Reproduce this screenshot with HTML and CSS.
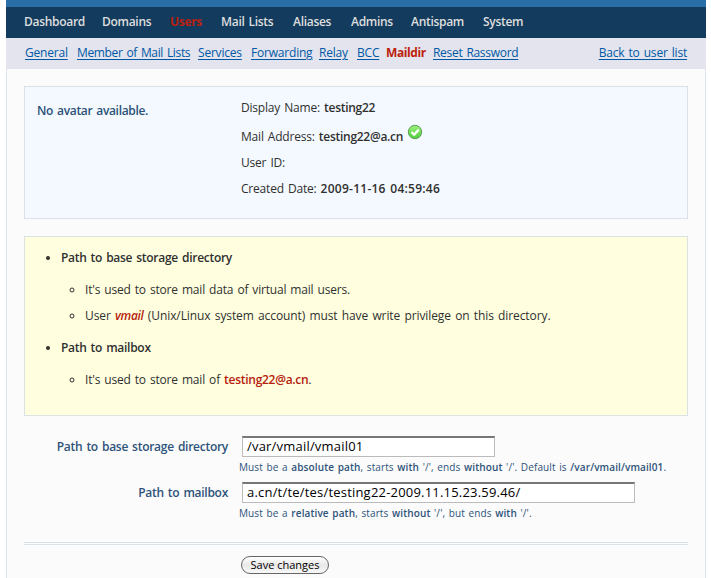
FILE: index.html
```html
<!DOCTYPE html>
<html lang="en">
<head>
<meta charset="utf-8">
<title>Maildir</title>
<link rel="stylesheet" href="styles.css">
</head>
<body>
<div class="page">
  <div class="topline"></div>
  <nav class="main-nav">
    <a>Dashboard</a><a>Domains</a><a class="active">Users</a><a>Mail Lists</a><a>Aliases</a><a>Admins</a><a>Antispam</a><a>System</a>
  </nav>
  <nav class="sub-nav">
    <a>General</a><a class="member">Member of Mail Lists</a><a>Services</a><a>Forwarding</a><a>Relay</a><a>BCC</a><a class="current">Maildir</a><a class="reset">Reset Rassword</a><a class="back">Back to user list</a>
  </nav>
  <main class="content">
    <section class="profile">
      <div class="avatar">No avatar available.</div>
      <div class="details">
        <p>Display Name: <b>testing22</b></p>
        <p class="mail">Mail Address: <b>testing22@a.cn</b><svg class="check" viewBox="0 0 16 16"><defs><linearGradient id="g" x1="0" y1="0" x2="0" y2="1"><stop offset="0" stop-color="#9df07f"/><stop offset="1" stop-color="#4fd03e"/></linearGradient></defs><circle cx="8" cy="8" r="6.7" fill="url(#g)" stroke="#5a9f4f"/><path d="M4.5 8.2 7.2 10.6 11.7 5.8" fill="none" stroke="#fff" stroke-width="2.3"/></svg></p>
        <p>User ID:</p>
        <p>Created Date: <b class="date">2009-11-16 04:59:46</b></p>
      </div>
    </section>
    <section class="notes">
      <ul>
        <li><b>Path to base storage directory</b>
          <ul>
            <li>It's used to store mail data of virtual mail users.</li>
            <li class="privilege">User <b class="red"><i>vmail</i></b> (Unix/Linux system account) must have write privilege on this directory.</li>
          </ul>
        </li>
        <li><b>Path to mailbox</b>
          <ul>
            <li>It's used to store mail of <b class="red">testing22@a.cn</b>.</li>
          </ul>
        </li>
      </ul>
    </section>
    <form class="form">
      <label>Path to base storage directory</label>
      <div class="field"><input class="base" type="text" value="/var/vmail/vmail01"><p>Must be a <b>absolute path</b>, starts <b>with</b> '/', ends <b>without</b> '/'. Default is <b>/var/vmail/vmail01</b>.</p></div>
      <label>Path to mailbox</label>
      <div class="field"><input class="box" type="text" value="a.cn/t/te/tes/testing22-2009.11.15.23.59.46/"><p>Must be a <b>relative path</b>, starts <b>without</b> '/', but ends <b>with</b> '/'.</p></div>
    </form>
    <div class="rule"></div>
    <button class="save" type="button">Save changes</button>
  </main>
</div>
</body>
</html>
```
FILE: styles.css
```css
* { box-sizing: border-box; }
html, body { margin: 0; height: 578px; overflow: hidden; background: #fff; }
body { font: 12px/26px "Open Sans", "Noto Sans", sans-serif; color: #303030; letter-spacing: -0.2px; word-spacing: 1.2px; }
p, ul { margin: 0; padding: 0; }
b { font-weight: 600; letter-spacing: -0.28px; }
.page { width: 700px; height: 578px; margin-left: 6px; background: #fbfbfb; border: solid #dce4ec; border-width: 0 1px; }
.topline { height: 7px; margin: 0 -1px; background: #2a6ea8; }
.main-nav { display: grid; grid-template-columns: 78px 68px 51px 72px 58px 60px 72px 1fr; height: 31px; margin: 0 -1px; padding-left: 18px; background: #123b5d; color: #dedede; font-weight: 600; line-height: 30px; letter-spacing: -0.3px; white-space: nowrap; }
.main-nav .active { color: #ba2110; font-weight: 700; }
.sub-nav { display: grid; grid-template-columns: 52px 121px 53px 68px 38px 29px 47px 1fr auto; justify-items: start; height: 31px; margin: 0 -1px; padding: 0 19px; background: #e3e4ed; line-height: 30px; color: #0058a5; white-space: nowrap; }
.sub-nav a { text-decoration: underline; text-underline-offset: 2px; }
.sub-nav .member { letter-spacing: -0.36px; }
.sub-nav .reset { letter-spacing: -0.3px; }
.sub-nav .current { color: #bd210b; font-weight: 700; letter-spacing: -0.4px; text-decoration: none; }
.content { padding: 17px 17px 0; }
.profile { display: flex; height: 133px; border: 1px solid #dae1e7; background: #f3f9fe; padding-top: 8px; white-space: nowrap; }
.avatar { width: 216px; padding: 3px 0 0 12px; color: #2c5278; font-weight: 600; letter-spacing: -0.33px; }
.details .mail { height: 29px; padding-top: 3px; }
.details .date { letter-spacing: 0.25px; }
.check { width: 16px; height: 16px; margin-left: 4px; vertical-align: 1px; }
.notes { margin-top: 17px; height: 180px; border: 1px solid #dae1e7; background: #ffffdf; padding: 8px 0 0 36px; white-space: nowrap; }
.notes ul ul { padding: 6px 0 6px 24px; }
.notes .privilege { letter-spacing: -0.09px; }
.red { color: #b6200c; }
.form { display: grid; grid-template-columns: 204px 1fr; grid-auto-rows: 46px; column-gap: 14px; margin-top: 20px; color: #2e537a; white-space: nowrap; }
.form label { text-align: right; font-weight: 600; line-height: 21px; letter-spacing: -0.27px; }
.field input { display: block; height: 21px; padding: 0 3px 2px 4px; border: 1px solid #bbb; border-top: 2px solid #777; background: #fff; font: 13px "Open Sans", sans-serif; letter-spacing: 0.2px; color: #000; }
.base { width: 253px; }
.box { width: 393px; }
.field p { margin-left: -3px; font-size: 10px; line-height: 20px; letter-spacing: 0.11px; word-spacing: 0.9px; }
.field b { letter-spacing: 0.11px; }
.rule { height: 3px; margin-top: 14px; border: solid #d9e0e6; border-width: 1px 0; }
.save { display: block; width: 88px; height: 18px; margin: 11px 0 0 217px; padding: 0; border: 1px solid #666; border-radius: 10px; background: linear-gradient(#fff, #e8e8e8 50%, #f8f8f8); font: 11px/14px "Open Sans", sans-serif; color: #000; }
```
